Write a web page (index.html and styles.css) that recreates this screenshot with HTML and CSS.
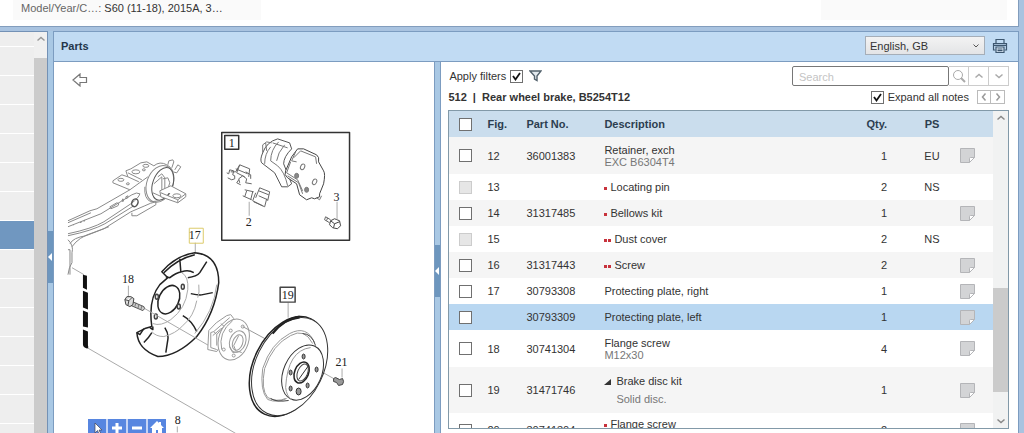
FILE: index.html
```html
<!DOCTYPE html>
<html lang="en">
<head>
    <meta charset="UTF-8">
    <meta name="viewport" content="width=device-width, initial-scale=1.0">
    <title>Parts</title>
    <link rel="stylesheet" href="styles.css">
</head>
<body>
    <svg class="symbols" aria-hidden="true">
        <symbol id="note" viewBox="0 0 15 15">
            <path d="M.5.5h14v9l-5 5h-9z" fill="#d3d4d6" stroke="#b4b5b8"/>
            <path d="M9.500 14.500v-4q0-1 1-1h4z" fill="#fff" stroke="#b4b5b8"/>
        </symbol>
        <symbol id="up" viewBox="0 0 10 10"><path d="M1.500 6.500 5 3.500l3.500 3" fill="none" stroke="currentColor" stroke-width="1.500"/></symbol>
        <symbol id="down" viewBox="0 0 10 10"><path d="M1.500 3.500 5 6.500l3.500-3" fill="none" stroke="currentColor" stroke-width="1.500"/></symbol>
    </svg>

    <header class="vehicle">
        <div class="vehicle-info">
            <span class="vehicle-label">Model/Year/C…:</span>
            <span>S60 (11-18), 2015A, 3…</span>
        </div>
        <div class="vehicle-extra"></div>
    </header>

    <div class="workspace">
        <nav class="sidebar">
            <div class="groups">
                <div class="group first"></div>
                <div class="group"></div>
                <div class="group"></div>
                <div class="group"></div>
                <div class="group"></div>
                <div class="group"></div>
                <div class="group"></div>
                <div class="group selected"></div>
                <div class="group"></div>
                <div class="group"></div>
                <div class="group"></div>
                <div class="group"></div>
                <div class="group"></div>
                <div class="group"></div>
                <div class="group"></div>
            </div>
            <div class="side-scroll">
                <svg class="arrow"><use href="#up"/></svg>
                <div class="thumb"></div>
            </div>
        </nav>
        <div class="splitter outer"><div class="grip"></div></div>

        <main class="parts">
            <div class="parts-header">
                <h1>Parts</h1>
                <select class="language" aria-label="Language">
                    <option>English, GB</option>
                </select>
                <button class="print" aria-label="Print">
                    <svg width="16" height="16" viewBox="0 0 16 16" fill="none" stroke="#3c566f" stroke-width="1.200">
                        <path d="M4 5V1.500h8V5M3.500 12H1.500V5.500h13V12h-2"/>
                        <path d="M4 9h8v5.500H4z" fill="#dceaf7"/>
                        <path d="M5.500 11h5M5.500 12.700h5M2 7.300h12"/>
                    </svg>
                </button>
            </div>

            <div class="parts-body">
                <section class="illustration">
                    <svg class="drawing" viewBox="54 62 381 371" preserveAspectRatio="xMinYMin meet" fill="none" stroke-linejoin="round">
                        <!-- trailing arm -->
                        <g stroke="#8a8a8a">
                            <path d="M68 221 90 211 97 209 130 190 148 177M68 223 91 213M68 234Q92 229 104 222L131 204Q139 198 140 194M68 236Q92 231 105 224L134 206M140 194q-3-2-8 1L101 214 68 227M70 244Q73 238 86 236L104 229 131 212 145 206Q151 203 156 202V205L137 216H132V213M68 240q6 6 4 13v10q-3 4-4 12M68 250h2v25M72 247Q79 237 93 233L109 227"/>
                            <path d="M110 207l7-4 2 1-1 2-7 3zM122 201l1-2 1 1-1 2zM126 197l2-1v2l-2 1zM73 225h1M80 223l2-1M84 222l1-2"/>
                            <ellipse cx="135" cy="203" rx="3" ry="4" transform="rotate(25 135 203)" stroke="#555" stroke-width="1.500"/>
                            <path d="M113 181 122 175 128 177 126 171 131 169 141 163 147 162 154 166M113 181v2l17 7M128 173l10 5 4 2M128 177l11 5"/>
                            <ellipse cx="121" cy="180" rx="3" ry="1.500"/><ellipse cx="136" cy="172" rx="4" ry="2"/>
                            <ellipse cx="146" cy="166" rx="3" ry="1.500"/><ellipse cx="128" cy="184" rx="1.500" ry="1"/>
                            <ellipse cx="144" cy="170" rx="1.500" ry="1"/>
                            <ellipse cx="160" cy="184" rx="13" ry="19" transform="rotate(20 160 184)"/>
                            <ellipse cx="163" cy="184" rx="10" ry="17" transform="rotate(20 163 184)" stroke="#555"/>
                            <path d="M145 187q-1 12 6 15l8-1M154 166q6-5 13-1 4 2 6 6"/>
                            <path d="M154 184l8-7v20M158 177l4-3 3 4v12l3-1M163 179l5-1 2 5-2 6M153 193l9 4"/>
                            <path d="M160 191 171 186 186 194v3l-8 6-17-6zM161 193l17 7 8-6M178 200v3" fill="#fff"/>
                            <ellipse cx="177" cy="196" rx="4" ry="2" fill="#fff"/>
                            <path d="M168 165l1-4 4-1 1 2-2 6M173 172l4 1 4-6-3-2-3 5"/>
                        </g>
                        <path d="M72 268 84 275M87 348 236 434" stroke="#aaa"/>
                        <path d="M83 275l4 1v14l-4-2zM83 291l5 2v17l-5-2zM83 311l5 2v15l-5-1zM83 330l5 2v14q1 3-1 3-4-1-4-4z" fill="#111"/>

                        <!-- brake pad kit -->
                        <path d="M222 132.500h128v108H222zM225 135.500h14v14h-14z" stroke="#333" stroke-width="1.500"/>
                        <g stroke="#777">
                            <path d="M263 153Q267 142 278 139l12 4 2 6q-8 8-8 15l8 20-4 3h-6l-7-14-13-10q-2-3 1-10z" fill="#fff" stroke="#555"/>
                            <path d="M263 153v-8l4-3 5 1M266 143l1 8M271 147q-6 7-6 17M279 142q-8 8-8 19l7 5M285 145q-7 8-8 16M278 166q7 6 10 20M273 143l15 5"/>
                            <path d="M292 157l6-8 6 0 13 6q3 2 2 7l5 9q2 3 0 13l-4 10v3l-5 2-3-1-5 2-7-5-3-11-9-6q-4-3-2-7z" fill="#fff" stroke="#444"/>
                            <path d="M294 158l7-7 15 6 1 7M291 162l-4 11 11 7 5 11M296 152l-4 9 5 1M288 176l11 7 4 11M317 198l3 2 2-4"/>
                            <ellipse cx="303" cy="167" rx="2" ry="3" transform="rotate(25 303 167)"/>
                            <ellipse cx="315" cy="182" rx="2" ry="3" transform="rotate(25 315 182)"/>
                            <ellipse cx="297" cy="176" rx="2" ry="2.500" fill="#888"/><ellipse cx="307" cy="190" rx="2" ry="2.500" fill="#888"/>
                        </g>
                        <g stroke="#666">
                            <path d="M228 178l4 2 3-1v-3l-2-1 1-4-4-1-1 4-2-1M231 172h5l4-7 10 4-1 8M236 169l12 5M240 165l-3 8 8 4M240 183l-1-4 4-3 4 3-1 4 6 1M239 180l-2 3 4 2M246 172l5 3v4"/>
                            <path d="M245 190l9 2M243 196l9 4M247 191l-2 6M253 192l-2 8M256 198l4-10 10 4-2 9M259 191l10 4M256 193l-3 8 10 5M259 196l9 4M254 202l11 5 2-8"/>
                            <path d="M326 217l5 3M325 220l5 3M326 217l-1 3M328 218l-1 3"/>
                            <path d="M331 221l4-2 5 2 1 5-3 3-5-1-3-3zM331 221l4 3 5-2M335 224l-1 4" stroke="#444"/>
                        </g>
                        <path d="M249.500 202v14M337.500 202v18M195.500 243v10M128.500 286v12M288.500 303v15M342.500 369v9M177.500 427v6" stroke="#aaa"/>

                        <!-- protecting plate -->
                        <path d="M162 272Q176 256 195 253 219 255 219 283 215 314 197 337 177 357 158 357 138 350 137 333L145 329 152 327Q148 300 160 285L168 278 165 275z" fill="#fff" stroke="#222" stroke-width="1.500"/>
                        <path d="M164 273Q178 259 195 255M166 277l4 1q6-5 12-6 7-2 12 1M180 259l1 13M207 262l-7 11q-3 4-12 5M213 293l-10 2q-3 1-12-1M183 316q9 5 14 16M165 328q4 6 3 12l-2 13M152 333q-3 5-8 10M137 333l3 2 4-6M150 328l3 2v-3" stroke="#222" stroke-width="1.500"/>
                        <path d="M217 285q-3 27-22 49M182 273q7 4 6 17-2 19-17 30-10 7-18 4M199 285q1 8-1 13M197 301q-3 16-14 25-7 8-19 11-8 0-12-5" stroke="#aaa"/>
                        <ellipse cx="169" cy="300" rx="10" ry="15" transform="rotate(25 169 300)" stroke="#222" stroke-width="1.500"/>
                        <g stroke="#444" stroke-width="1.500">
                            <ellipse cx="183" cy="287" rx="1.500" ry="2.500"/><ellipse cx="179" cy="307" rx="1.500" ry="2.500"/>
                            <ellipse cx="156" cy="317" rx="1.500" ry="2.500"/><ellipse cx="157" cy="297" rx="1.500" ry="2.500"/>
                        </g>
                        <path d="M145 309 209 346M318 370 334 379" stroke="#aaa"/>
                        <path d="M130 301 144 307q2 2-1 4L129 305z" fill="#ccc" stroke="#555"/>
                        <path d="M133 302l-1 4M136 303l-1 4M139 305l-1 4M142 306l-1 4" stroke="#777"/>
                        <path d="M125 300l2-3 4 0 3 2-1 6-3 2-4-2zM125 300l4 1 3-3M129 301l-1 5" fill="#ddd" stroke="#444"/>

                        <!-- hub -->
                        <g stroke="#999">
                            <path d="M208 350l1-19q6-8 18-15l4-1 3 4-2 6M208 350l9 2 5-8M211 333l3-1 16-14M211 333v15l6 2M213 336q8-8 15-10M214 332l3 3v11M221 324l5 4M217 335q4-6 9-8" fill="#fff"/>
                            <ellipse cx="234" cy="340" rx="15" ry="21" transform="rotate(18 234 340)" fill="#fff"/>
                            <path d="M222 350q-4-17 11-29"/>
                            <ellipse cx="238" cy="342" rx="8" ry="11" transform="rotate(20 238 342)"/>
                            <ellipse cx="238" cy="343" rx="5" ry="8" transform="rotate(20 238 343)"/>
                            <path d="M230 347l3 6 6-1 3 1M239 336l-5 10 2 5"/>
                            <circle cx="243" cy="327" r="1.500"/><circle cx="231" cy="331" r="1.500"/><circle cx="224" cy="350" r="1.500"/><circle cx="234" cy="356" r="1.500"/>
                            <path d="M243 327 267 340"/>
                        </g>

                        <!-- brake disc -->
                        <ellipse cx="288" cy="367" rx="34" ry="53" transform="rotate(26 288 367)" fill="#fff" stroke="#222" stroke-width="1.500"/>
                        <ellipse cx="290" cy="367" rx="34" ry="52" transform="rotate(26 290 367)" fill="#fff" stroke="#333"/>
                        <path d="M273 334Q284 320 300 317M275 331q10-11 25-13" stroke="#222" stroke-width="2"/>
                        <path d="M313 344q-8-16-22-8-18 9-26 33-4 21 3 29 9 5 18 1M315 343q-8-18-25-9-19 10-27 35-3 22 5 31 10 4 19-1" stroke="#999"/>
                        <path d="M303 334q9 0 13 12M289 401q-12 2-18-2" stroke="#444"/>
                        <ellipse cx="303" cy="373" rx="19" ry="29" transform="rotate(24 303 373)" fill="#fff" stroke="#333"/>
                        <path d="M311 348q-23 3-25 40 1 9 6 12" stroke="#999"/>
                        <ellipse cx="302" cy="373" rx="7" ry="11" transform="rotate(22 302 373)" stroke="#222" stroke-width="1.500"/>
                        <ellipse cx="303" cy="373" rx="5" ry="9" transform="rotate(22 303 373)" stroke="#444"/>
                        <path d="M309 366 299 380" stroke="#333"/>
                        <g stroke="#333" fill="#999">
                            <ellipse cx="304" cy="357" rx="1.500" ry="2.500"/><ellipse cx="291" cy="373" rx="1.500" ry="2.500"/>
                            <ellipse cx="317" cy="370" rx="1.500" ry="2.500"/><ellipse cx="291" cy="389" rx="1.500" ry="2.500"/>
                            <ellipse cx="308" cy="386" rx="1.500" ry="2.500"/><ellipse cx="299" cy="392" rx="2.500" ry="3.500"/>
                        </g>
                        <path d="M334 379l2-1 4 2 3-1q2 3 0 6l-4 1-2-3-3-1z" fill="#999" stroke="#444"/>

                        <path d="M280.500 287.500h15v15h-15z" stroke="#444" stroke-width="1.500"/>
                        <path d="M189.500 228.500h14v15h-14z" stroke="#dccb6a"/>
                        <g class="callouts">
                            <text x="232" y="147">1</text>
                            <text x="249" y="226">2</text>
                            <text x="337" y="201">3</text>
                            <text x="195" y="239">17</text>
                            <text x="128" y="283">18</text>
                            <text x="288" y="299">19</text>
                            <text x="342" y="366">21</text>
                            <text x="178" y="425">8</text>
                        </g>
                    </svg>
                    <button class="back" aria-label="Back">
                        <svg width="16" height="14" viewBox="0 0 16 14"><path d="M1 7l7-6v3.500h6.500v5H8V13z" fill="#fff" stroke="#777" stroke-width="1.200"/></svg>
                    </button>
                    <div class="zoom-tools">
                        <button aria-label="Select"><svg viewBox="0 0 18 18"><path d="M7 4v10l2.500-2.500L11 15l1.500-1-1.500-3h3z" fill="#fff" stroke="#445" stroke-width=".7"/></svg></button>
                        <button aria-label="Zoom in"><svg viewBox="0 0 18 18"><path d="M9 4v10M4 9h10" stroke="#fff" stroke-width="3"/></svg></button>
                        <button aria-label="Zoom out"><svg viewBox="0 0 18 18"><path d="M4 9h10" stroke="#fff" stroke-width="3"/></svg></button>
                        <button aria-label="Reset zoom"><svg viewBox="0 0 18 18"><path d="M2 9l7-7 2 2V3h2v3l3 3h-2v6h-4v-4H8v4H4V9z" fill="#fff"/></svg></button>
                    </div>
                </section>
                <div class="splitter inner"><div class="grip"></div></div>

                <section class="list">
                    <div class="toolbar">
                        <label class="filter">Apply filters <input type="checkbox" checked></label>
                        <svg class="funnel" width="13" height="12" viewBox="0 0 13 12"><path d="M1 1h11L8 6v4.500L5.500 9V6z" fill="#e2e9ee" stroke="#52616c" stroke-width="1.400"/></svg>
                        <div class="search">
                            <input type="text" placeholder="Search" aria-label="Search">
                            <button aria-label="Find"><svg width="14" height="14" viewBox="0 0 14 14" fill="none" stroke="currentColor"><circle cx="6" cy="6" r="4.500"/><path d="M9 9l4 4" stroke-width="2"/></svg></button>
                            <button aria-label="Previous match"><svg width="10" height="10"><use href="#up"/></svg></button>
                            <button aria-label="Next match"><svg width="10" height="10"><use href="#down"/></svg></button>
                        </div>
                    </div>
                    <div class="title-row">
                        <h2>512&nbsp; |&nbsp; Rear wheel brake, B5254T12</h2>
                        <label class="expand"><input type="checkbox" checked> Expand all notes</label>
                        <div class="pager">
                            <button aria-label="Previous"><svg width="8" height="10" viewBox="0 0 8 10"><path d="M5.500 1.500 2.500 5l3 3.500" fill="none" stroke="currentColor" stroke-width="1.500"/></svg></button>
                            <button aria-label="Next"><svg width="8" height="10" viewBox="0 0 8 10"><path d="M2.500 1.500 5.500 5l-3 3.500" fill="none" stroke="currentColor" stroke-width="1.500"/></svg></button>
                        </div>
                    </div>

                    <div class="grid">
                        <div class="grid-view">
                            <table>
                                <thead>
                                    <tr>
                                        <th class="check"><input type="checkbox" aria-label="Select all"></th>
                                        <th class="fig">Fig.</th>
                                        <th class="part">Part No.</th>
                                        <th>Description</th>
                                        <th class="qty">Qty.</th>
                                        <th class="ps">PS</th>
                                        <th class="notes"></th>
                                    </tr>
                                </thead>
                                <tbody>
                                    <tr class="odd tall">
                                        <td class="check"><input type="checkbox" aria-label="36001383"></td>
                                        <td>12</td><td>36001383</td>
                                        <td>Retainer, exch<div class="sub">EXC B6304T4</div></td>
                                        <td class="qty">1</td><td class="ps">EU</td>
                                        <td><svg class="note"><use href="#note"/></svg></td>
                                    </tr>
                                    <tr>
                                        <td class="check"><input type="checkbox" aria-label="Locating pin" disabled></td>
                                        <td>13</td><td></td>
                                        <td><span class="dots"><i></i></span>Locating pin</td>
                                        <td class="qty">2</td><td class="ps">NS</td><td></td>
                                    </tr>
                                    <tr class="odd">
                                        <td class="check"><input type="checkbox" aria-label="31317485"></td>
                                        <td>14</td><td>31317485</td>
                                        <td><span class="dots"><i></i></span>Bellows kit</td>
                                        <td class="qty">1</td><td></td>
                                        <td><svg class="note"><use href="#note"/></svg></td>
                                    </tr>
                                    <tr>
                                        <td class="check"><input type="checkbox" aria-label="Dust cover" disabled></td>
                                        <td>15</td><td></td>
                                        <td><span class="dots"><i></i><i></i></span>Dust cover</td>
                                        <td class="qty">2</td><td class="ps">NS</td><td></td>
                                    </tr>
                                    <tr class="odd">
                                        <td class="check"><input type="checkbox" aria-label="31317443"></td>
                                        <td>16</td><td>31317443</td>
                                        <td><span class="dots"><i></i><i></i></span>Screw</td>
                                        <td class="qty">2</td><td></td>
                                        <td><svg class="note"><use href="#note"/></svg></td>
                                    </tr>
                                    <tr>
                                        <td class="check"><input type="checkbox" aria-label="30793308"></td>
                                        <td>17</td><td>30793308</td>
                                        <td>Protecting plate, right</td>
                                        <td class="qty">1</td><td></td>
                                        <td><svg class="note"><use href="#note"/></svg></td>
                                    </tr>
                                    <tr class="current">
                                        <td class="check"><input type="checkbox" aria-label="30793309"></td>
                                        <td></td><td>30793309</td>
                                        <td>Protecting plate, left</td>
                                        <td class="qty">1</td><td></td>
                                        <td><svg class="note"><use href="#note"/></svg></td>
                                    </tr>
                                    <tr class="tall">
                                        <td class="check"><input type="checkbox" aria-label="30741304"></td>
                                        <td>18</td><td>30741304</td>
                                        <td>Flange screw<div class="sub">M12x30</div></td>
                                        <td class="qty">4</td><td></td>
                                        <td><svg class="note"><use href="#note"/></svg></td>
                                    </tr>
                                    <tr class="odd kit">
                                        <td class="check"><input type="checkbox" aria-label="31471746"></td>
                                        <td>19</td><td>31471746</td>
                                        <td><span class="open"></span>Brake disc kit<div class="sub">Solid disc.</div></td>
                                        <td class="qty">1</td><td></td>
                                        <td><svg class="note"><use href="#note"/></svg></td>
                                    </tr>
                                    <tr class="last">
                                        <td class="check"><input type="checkbox" aria-label="30741304"></td>
                                        <td>20</td><td>30741304</td>
                                        <td><span class="dots"><i></i></span>Flange screw<div class="sub">&nbsp;</div></td>
                                        <td class="qty">2</td><td></td>
                                        <td><svg class="note"><use href="#note"/></svg></td>
                                    </tr>
                                </tbody>
                            </table>
                        </div>
                        <div class="grid-scroll">
                            <svg class="arrow"><use href="#up"/></svg>
                            <div class="above"></div>
                            <div class="thumb"></div>
                            <div class="below"></div>
                            <svg class="arrow"><use href="#down"/></svg>
                        </div>
                    </div>
                </section>
            </div>
        </main>
    </div>
</body>
</html>
```

FILE: styles.css
```css
* {
    box-sizing: border-box;
}

body {
    display: flex;
    flex-direction: column;
    height: 100vh;
    margin: 0;
    padding-right: 5px;
    overflow: hidden;
    background-color: #a9c3e0;
    color: #333;
    font-family: "Liberation Sans", Arial, sans-serif;
    font-size: 11px;
    line-height: 12px;
}

button {
    display: flex;
    align-items: center;
    justify-content: center;
    margin: 0;
    padding: 0;
    border: none;
    background: none;
}

.symbols {
    position: absolute;
    width: 0;
    height: 0;
}

/* vehicle bar */
.vehicle {
    display: flex;
    flex: none;
    justify-content: space-between;
    height: 27px;
    padding: 0 11px 6px 13px;
    background-color: #fff;
    border-bottom: 1px solid #829dbd;
    border-right: 1px solid #829dbd;
}

.vehicle-info {
    display: flex;
    gap: 3px;
    width: 248px;
    padding: 2px 8px;
    background-color: #fafafa;
}

.vehicle-label {
    color: #666;
}

.vehicle-extra {
    width: 186px;
    background-color: #fafafa;
}

.workspace {
    display: flex;
    flex: 1;
    min-height: 0;
    padding-top: 4px;
}

/* group list */
.sidebar {
    display: flex;
    width: 48px;
    overflow: hidden;
    border-top: 1px solid #7391b5;
    border-right: 1px solid #7391b5;
    background-color: #fff;
}

.groups {
    flex: 1;
}

.group {
    height: 29px;
    border-bottom: 1px solid #fff;
    background-color: #eee;
}

.group.first {
    height: 15px;
}

.group.selected {
    background-color: #7097c0;
}

.side-scroll {
    display: flex;
    flex-direction: column;
    width: 13px;
    background-color: #f0f0f0;
}

.arrow {
    flex: none;
    align-self: center;
    width: 10px;
    height: 14px;
    color: #999;
}

.thumb {
    background-color: #cbcbcb;
}

.side-scroll .thumb {
    flex: 1;
    margin-top: 12px;
}

.splitter {
    flex: none;
    width: 5px;
    background-color: #a9c8e4;
}

.splitter.outer {
    padding-top: 200px;
}

.splitter.inner {
    padding-top: 183px;
}

.grip {
    display: flex;
    align-items: center;
    height: 52px;
    background-color: #6d96be;
}

.grip::before {
    content: "";
    border: 4px solid transparent;
    border-left: none;
    border-right-color: #fff;
}

/* parts panel */
.parts {
    display: flex;
    flex: 1;
    flex-direction: column;
    min-width: 0;
    border: 1px solid #7c9cc0;
    border-bottom: none;
}

.parts-header {
    display: flex;
    flex: none;
    align-items: center;
    gap: 7px;
    height: 30px;
    padding: 0 10px 2px 7px;
    border-bottom: 1px solid #7c9cc0;
    background-color: #c1dbf3;
}

h1,
h2 {
    margin: 0;
    font-size: 11px;
}

h1 {
    flex: 1;
    color: #24364a;
}

.language {
    width: 120px;
    height: 19px;
    padding: 0 4px;
    appearance: none;
    border: 1px solid #a5aeb8;
    border-radius: 0;
    background: url("data:image/svg+xml,%3Csvg xmlns='http://www.w3.org/2000/svg' width='6' height='4'%3E%3Cpath d='M.5.5 3 3 5.500.5' fill='none' stroke='%23555'/%3E%3C/svg%3E") no-repeat right 5px center, linear-gradient(#f3f3f3, #e3e4e6);
    color: #333;
    font: inherit;
}

.parts-body {
    display: flex;
    flex: 1;
    min-height: 0;
}

.illustration {
    position: relative;
    flex: 380;
    min-width: 0;
    overflow: hidden;
    border-right: 1px solid #7c9cc0;
    background-color: #fff;
}

.drawing {
    display: block;
    width: 100%;
    height: 100%;
}

.callouts {
    fill: #222;
    font-family: "Liberation Serif", serif;
    font-size: 12px;
    text-anchor: middle;
}

.back {
    position: absolute;
    top: 11px;
    left: 18px;
}

.zoom-tools {
    position: absolute;
    bottom: -4px;
    left: 34px;
    display: flex;
    gap: 2px;
    background-color: #c4d3f5;
}

.zoom-tools button {
    width: 18px;
    height: 18px;
    background-color: #5786e0;
}

.zoom-tools svg {
    width: 18px;
    height: 18px;
}

/* parts list */
.list {
    display: flex;
    flex: 560;
    flex-direction: column;
    min-width: 0;
    padding: 4px 9px 4px 7px;
    border-left: 1px solid #7c9cc0;
    background-color: #fff;
}

input[type="checkbox"] {
    display: block;
    width: 13px;
    height: 13px;
    margin: 0;
    appearance: none;
    border: 1px solid #707070;
    background-color: #fff;
}

input[type="checkbox"]:checked {
    background-image: url("data:image/svg+xml,%3Csvg xmlns='http://www.w3.org/2000/svg' width='11' height='11'%3E%3Cpath d='M2 5l2.500 3.500L9 2' fill='none' stroke='%23111' stroke-width='1.800'/%3E%3C/svg%3E");
}

input[type="checkbox"]:disabled {
    border-color: #ccc;
    background-color: #e6e6e6;
}

.toolbar,
.title-row,
.filter,
.expand,
.search,
.pager {
    display: flex;
    align-items: center;
}

.filter {
    gap: 4px;
    padding-left: 1px;
}

.funnel {
    margin-left: 6px;
}

.search {
    margin-left: auto;
}

.search input {
    width: 157px;
    height: 20px;
    padding: 2px 6px 0;
    border: 1px solid #777;
    border-radius: 2px;
    font: inherit;
}

.search input::placeholder {
    color: #c4c4c4;
}

.search button {
    width: 20px;
    height: 20px;
    border: 1px solid #ccc;
    border-left: none;
    color: #aaa;
}

.title-row {
    height: 24px;
    padding-bottom: 2px;
}

.expand {
    gap: 4px;
    margin-left: auto;
}

.pager {
    margin: 0 9px 0 8px;
}

.pager button {
    width: 14px;
    height: 14px;
    border: 1px solid #bbb;
    color: #999;
}

.pager button + button {
    border-left: none;
}

.title-row .pager {
    margin-right: 4px;
}

.grid {
    display: flex;
    flex: 1;
    min-height: 0;
    border: 1px solid #8299a8;
}

.grid-view {
    flex: 1;
    overflow: hidden;
}

table {
    width: 100%;
    table-layout: fixed;
    border-collapse: collapse;
}

th,
td {
    height: 26px;
    padding: 0;
    text-align: left;
}

th {
    background-color: #cadded;
    color: #2c3e50;
}

.odd {
    background-color: #f5f5f5;
}

.current {
    background-color: #b9d7f1;
}

.tall td {
    height: 37px;
}

.kit td {
    height: 46px;
    line-height: 18px;
}

.last td {
    height: 34px;
}

.kit .sub {
    padding-left: 12px;
}

.check {
    width: 38px;
    padding-left: 10px;
}

.fig {
    width: 39px;
}

.part {
    width: 78px;
}

th.qty,
td.qty {
    width: 54px;
    padding-right: 17px;
    text-align: right;
}

th.ps,
td.ps {
    width: 56px;
    text-align: center;
}

.notes {
    width: 33px;
}

.sub {
    color: #777;
}

.note {
    display: block;
    width: 15px;
    height: 15px;
}

.dots {
    display: inline-flex;
    gap: 1px;
    margin-right: 3px;
    vertical-align: middle;
}

.dots i {
    width: 3px;
    height: 3px;
    background-color: #c8323c;
}

.open {
    display: inline-block;
    margin-right: 5px;
    border-bottom: 6px solid #333;
    border-left: 7px solid transparent;
}

.grid-scroll {
    display: flex;
    flex-direction: column;
    width: 15px;
    background-color: #f1f2f2;
}

.grid-scroll .arrow {
    color: #888;
}

.above {
    flex: 163;
}

.grid-scroll .thumb {
    flex: 104;
}

.below {
    flex: 22;
}
```
